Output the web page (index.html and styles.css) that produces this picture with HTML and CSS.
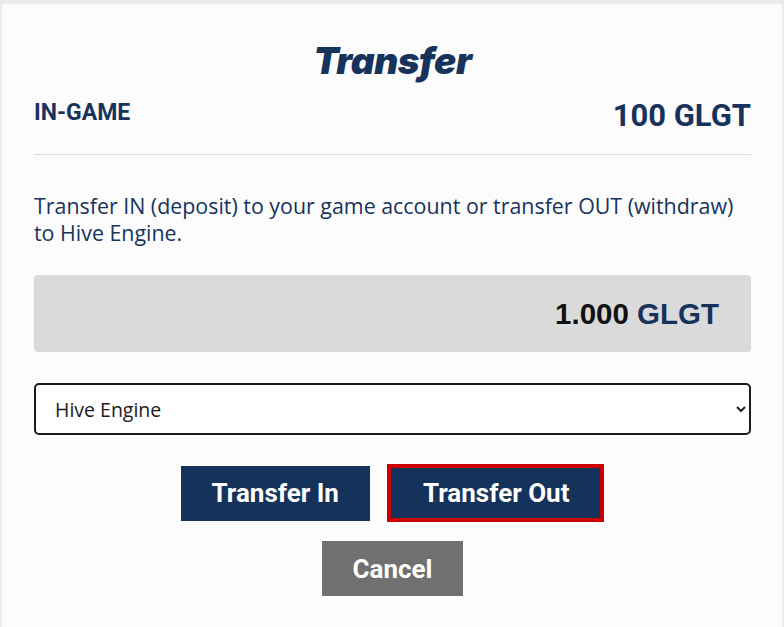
FILE: index.html
```html
<!DOCTYPE html>
<html lang="en">
<head>
  <meta charset="UTF-8">
  <title>Transfer</title>
  <link rel="stylesheet" href="styles.css">
</head>
<body>
  <div class="modal">
    <h1 class="title">Transfer</h1>

    <div class="balance">
      <span class="balance-label">IN-GAME</span>
      <span class="balance-value">100 GLGT</span>
    </div>

    <p class="info">Transfer IN (deposit) to your game account or transfer OUT (withdraw) to Hive Engine.</p>

    <div class="amount">
      <span><span class="amount-num">1.000</span> <span class="amount-unit">GLGT</span></span>
    </div>

    <div class="select-wrap">
      <select class="target">
        <option>Hive Engine</option>
      </select>
    </div>

    <div class="actions actions-main">
      <button class="btn btn-primary">Transfer In</button>
      <button class="btn btn-primary focused">Transfer Out</button>
    </div>
    <div class="actions actions-cancel">
      <button class="btn btn-cancel">Cancel</button>
    </div>
  </div>
</body>
</html>
```

FILE: styles.css
```css
* {
  box-sizing: border-box;
}

body {
  margin: 0;
  background: #e9ecef;
  font-family: "Open Sans", "Roboto", sans-serif;
  color: #17335c;
  padding: 4px 2px 0 2px;
  min-height: 100vh;
}

.modal {
  background: #fcfcfc;
  padding: 27px 31px 30px 32px;
  min-height: 623px;
}

.title {
  margin: 0;
  text-align: center;
  font-family: "Inter", sans-serif;
  font-style: italic;
  font-weight: 900;
  font-size: 37px;
  line-height: 60px;
  color: #17335c;
  letter-spacing: -0.5px;
}

.balance {
  display: flex;
  justify-content: space-between;
  align-items: flex-start;
  margin-top: 7px;
  padding-bottom: 20px;
  border-bottom: 1px solid #dcdcdc;
}

.balance-label {
  font-family: "Roboto", sans-serif;
  font-weight: 700;
  font-size: 23px;
  line-height: 30px;
}

.balance-value {
  font-family: "Roboto", sans-serif;
  font-weight: 700;
  font-size: 31px;
  line-height: 36px;
}

.info {
  margin: 37px 0 29px;
  font-size: 21.4px;
  line-height: 27px;
  color: #17335c;
}

.amount {
  background: #dadada;
  border-radius: 4px;
  height: 77px;
  display: flex;
  align-items: center;
  justify-content: flex-end;
  padding-right: 32px;
  font-family: "Liberation Sans", Arial, sans-serif;
  font-weight: 700;
  font-size: 29.5px;
}

.amount-num {
  color: #111;
}

.amount-unit {
  color: #17335c;
}

.select-wrap {
  margin-top: 31px;
}

.target {
  width: 100%;
  height: 52px;
  border: 2px solid #1b1b1b;
  border-radius: 5px;
  background: #fff;
  font-family: "Open Sans", sans-serif;
  font-size: 19.5px;
  color: #1b1b1b;
  padding: 0 12px 0 15px;
}

.actions {
  display: flex;
  justify-content: center;
  align-items: center;
  gap: 17px;
}

.actions-main {
  margin-top: 29px;
}

.actions-cancel {
  margin-top: 19px;
}

.btn {
  border: none;
  height: 55px;
  padding: 0 31px;
  font-family: "Roboto", sans-serif;
  font-weight: 700;
  font-size: 26px;
  color: #fff;
  cursor: pointer;
}

.btn-primary {
  background: #15325a;
}

.btn-primary.focused {
  height: 58px;
  border: 4px solid #cc0000;
  padding: 0 31px 0 32px;
}

.btn-cancel {
  background: #707070;
  padding: 0 31px;
}
```
